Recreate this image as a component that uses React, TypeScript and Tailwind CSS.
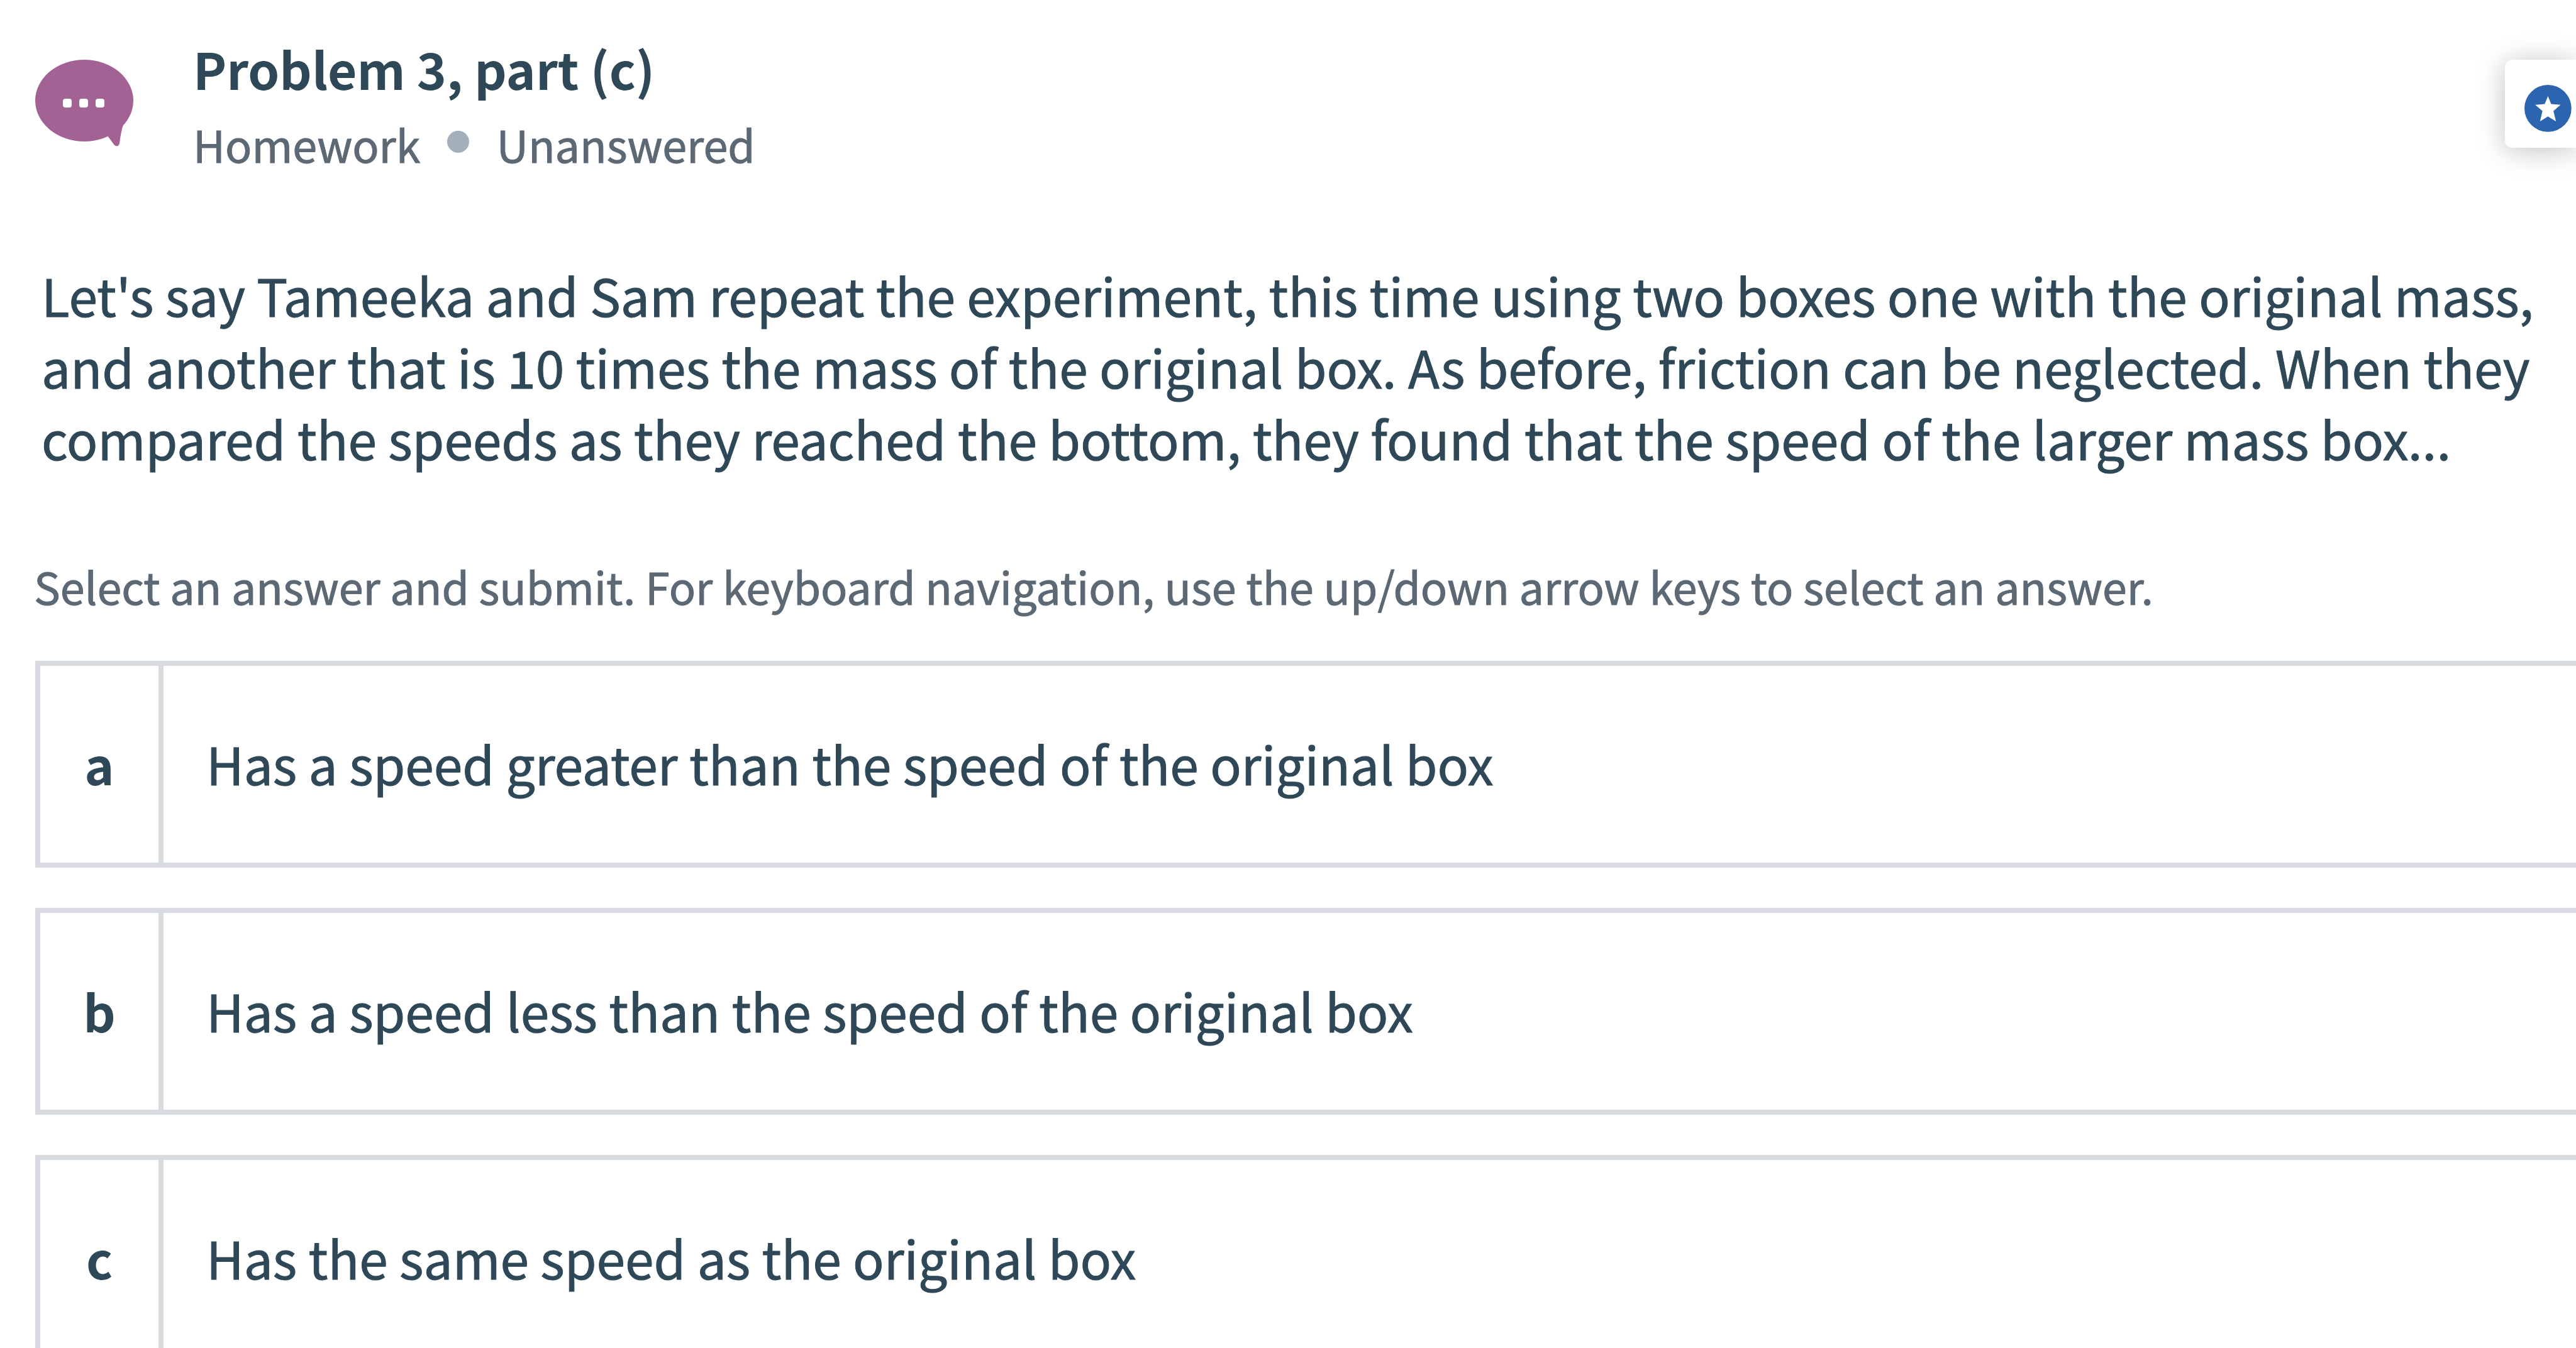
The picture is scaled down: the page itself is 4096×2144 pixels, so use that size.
import { useState } from "react";

type Option = {
  key: string;
  text: string;
};

const options: Option[] = [
  { key: "a", text: "Has a speed greater than the speed of the original box" },
  { key: "b", text: "Has a speed less than the speed of the original box" },
  { key: "c", text: "Has the same speed as the original box" },
];

function BubbleIcon() {
  return (
    <svg viewBox="0 0 156 138" className="h-[138px] w-[156px] shrink-0" aria-hidden>
      <ellipse cx="78" cy="65" rx="78" ry="65" fill="#a26294" />
      <path d="M140 103Q136 116 134 133Q132 140 126 136L115 121L120 100Z" fill="#a26294" />
      <g fill="#fff">
        <rect x="44" y="62" width="14" height="14" rx="4" />
        <rect x="70" y="62" width="14" height="14" rx="4" />
        <rect x="96" y="62" width="14" height="14" rx="4" />
      </g>
    </svg>
  );
}

function StarIcon() {
  return (
    <svg viewBox="0 0 275 275" className="size-[75px] shrink-0" aria-hidden>
      <circle cx="137" cy="137" r="137" fill="#2c64b0" />
      <path
        d="M137 66L156 112L211 116L169 152L184 213L137 184L91 213L105 152L63 116L118 112Z"
        fill="#fff"
      />
    </svg>
  );
}

function AnswerOption({
  option,
  checked,
  onSelect,
}: {
  option: Option;
  checked: boolean;
  onSelect: () => void;
}) {
  return (
    <label className="relative flex h-[329px] cursor-pointer items-stretch border-8 border-r-0 border-[#d8dce0] has-focus-visible:border-[#2c64b0]">
      <input
        type="radio"
        name="answer"
        value={option.key}
        checked={checked}
        onChange={onSelect}
        className="sr-only"
      />
      <span className="flex w-[196px] shrink-0 items-center justify-center border-r-8 border-[#d8dce0] pb-1 text-[80px] leading-[114px] font-bold">
        {option.key}
      </span>
      <span className="flex flex-1 items-center pb-1 pl-[68px] text-[82px] leading-[114px] [-webkit-text-stroke:1px]">
        {option.text}
      </span>
    </label>
  );
}

export default function App() {
  const [answer, setAnswer] = useState("");

  return (
    <main className="h-screen overflow-hidden bg-white pt-[44px] pl-[54px] font-['Noto_Sans_CJK_SC',sans-serif] text-[#2f4858]">
      <header className="flex items-start pl-[2px]">
        <div className="pt-[51px]">
          <BubbleIcon />
        </div>
        <div className="ml-[95px] flex-1">
          <h1 className="text-[80px] leading-[128px] font-bold">Problem 3, part (c)</h1>
          <p className="flex items-center gap-[43px] text-[70px] leading-[114px] text-[#5c6975] [-webkit-text-stroke:1px]">
            <span>Homework</span>
            <span className="mb-2 size-[35px] rounded-full bg-[#a3afbb]" />
            <span>Unanswered</span>
          </p>
        </div>
        <button
          type="button"
          aria-label="Bookmark"
          className="mt-[51px] flex h-[140px] w-[113px] items-center rounded-l-[12px] bg-white pt-[14px] pl-[31px] shadow-[0_4px_44px_rgba(0,0,0,0.25)]"
        >
          <StarIcon />
        </button>
      </header>

      <p className="mt-[126px] pr-[40px] pl-[12px] text-[82px] leading-[114px] [-webkit-text-stroke:1px]">
        Let's say Tameeka and Sam repeat the experiment, this time using two boxes one with the
        original mass, and another that is 10 times the mass of the original box. As before,
        friction can be neglected. When they compared the speeds as they reached the bottom, they
        found that the speed of the larger mass box...
      </p>

      <fieldset className="mt-[128px]">
        <legend className="text-[70px] leading-[100px] text-[#5c6975] [-webkit-text-stroke:1px]">
          Select an answer and submit. For keyboard navigation, use the up/down arrow keys to select
          an answer.
        </legend>
        <div className="mt-[69px] flex flex-col gap-[64px] pl-[2px]">
          {options.map((option) => (
            <AnswerOption
              key={option.key}
              option={option}
              checked={answer === option.key}
              onSelect={() => setAnswer(option.key)}
            />
          ))}
        </div>
      </fieldset>
    </main>
  );
}
